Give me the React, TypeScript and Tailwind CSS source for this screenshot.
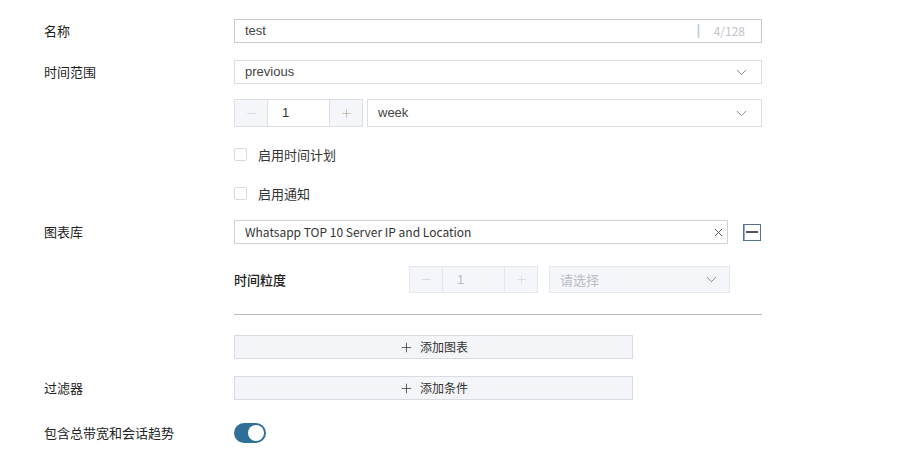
import { Plus, Minus, ChevronDown, X } from "lucide-react";

/* ── Shared bits ── */

const CJK = "font-['Noto_Sans_CJK_SC',sans-serif]";
const ARIAL = "font-['Liberation_Sans','Noto_Sans_CJK_SC',sans-serif]";

function Label({ children }: { children: React.ReactNode }) {
  return (
    <div className={`w-[234px] shrink-0 pl-[44px] text-[13px] text-[#222] ${CJK}`}>
      {children}
    </div>
  );
}

const Spacer = () => <div className="w-[234px] shrink-0" />;

function Stepper({ disabled }: { disabled?: boolean }) {
  const border = disabled ? "border-[#e4e7ed]" : "border-[#dcdfe6]";
  return (
    <div className={`flex h-full w-[129px] border ${border}`}>
      <div className={`flex w-[33px] items-center justify-center border-r ${border} bg-[#f4f6f9]`}>
        <Minus size={13} strokeWidth={1.2} className="text-[#c4c8d0]" />
      </div>
      <div
        className={`flex flex-1 items-center pl-[14px] text-[13px] ${ARIAL} ${
          disabled ? "bg-[#f4f6f9] text-[#b8bcc4]" : "bg-white text-[#333]"
        }`}
      >
        1
      </div>
      <div className={`flex w-[33px] items-center justify-center border-l ${border} bg-[#f4f6f9]`}>
        <Plus size={13} strokeWidth={1.2} className={disabled ? "text-[#d0d4da]" : "text-[#b0a090]"} />
      </div>
    </div>
  );
}

function Checkbox({ label }: { label: string }) {
  return (
    <div className="flex items-center">
      <Spacer />
      <div className="h-[13px] w-[13px] rounded-[2px] border border-[#d8dbe0] bg-white" />
      <span className={`ml-[11px] text-[13px] text-[#333] ${CJK}`}>{label}</span>
    </div>
  );
}

function AddButton({ label }: { label: string }) {
  return (
    <div className="flex h-[24px] w-[399px] items-center justify-center gap-[6px] border border-[#d8dce2] bg-[#f3f5f8]">
      <Plus size={15} strokeWidth={1.2} className="text-[#333]" />
      <span className={`text-[12px] text-[#333] ${CJK}`}>{label}</span>
    </div>
  );
}

/* ── Page ── */

export default function App() {
  return (
    <div className="h-[458px] w-[923px] bg-white pt-[19px]">
      {/* 名称 */}
      <div className="flex h-[24px] items-center">
        <Label>名称</Label>
        <div className="flex h-full w-[528px] items-center border border-[#c8cad2] pl-[10px] pr-[16px]">
          <span className={`flex-1 text-[13px] text-[#444] ${ARIAL}`}>test</span>
          <div className="mr-[14px] h-[14px] w-[3px] bg-gradient-to-r from-white via-[#b8cfe0] to-white" />
          <span className={`text-[12px] text-[#c0c4cc] ${CJK}`}>4/128</span>
        </div>
      </div>

      {/* 时间范围 */}
      <div className="mt-[17px] flex h-[24px] items-center">
        <Label>时间范围</Label>
        <div className="flex h-full w-[528px] items-center border border-[#dcdfe6] pl-[10px] pr-[11px]">
          <span className={`flex-1 text-[13px] text-[#444] ${ARIAL}`}>previous</span>
          <ChevronDown size={17} strokeWidth={1.1} className="text-[#666]" />
        </div>
      </div>

      <div className="mt-[15px] flex h-[28px]">
        <Spacer />
        <Stepper />
        <div className="ml-[4px] flex h-full w-[395px] items-center border border-[#dcdfe6] pl-[10px] pr-[11px]">
          <span className={`flex-1 text-[13px] text-[#444] ${ARIAL}`}>week</span>
          <ChevronDown size={17} strokeWidth={1.1} className="text-[#666]" />
        </div>
      </div>

      <div className="mt-[18px]">
        <Checkbox label="启用时间计划" />
      </div>
      <div className="mt-[19px]">
        <Checkbox label="启用通知" />
      </div>

      {/* 图表库 */}
      <div className="mt-[17px] flex h-[24px] items-center">
        <Label>图表库</Label>
        <div className="flex h-full w-[494px] items-center border border-[#cfd1d6] pl-[10px] pr-[2px]">
          <span className={`flex-1 text-[12px] text-[#333] ${CJK}`}>
            Whatsapp TOP 10 Server IP and Location
          </span>
          <X size={13} strokeWidth={1.8} className="text-[#555]" />
        </div>
        <div className="ml-[15px] flex h-[17px] w-[18px] items-center justify-center border border-[#5a6f8a] shadow-[inset_1px_0_0_#8fb3d8]">
          <div className="h-[1.5px] w-[12px] bg-[#555]" />
        </div>
      </div>

      {/* 时间粒度 */}
      <div className="mt-[22px] flex h-[27px] items-center">
        <Spacer />
        <div className={`w-[175px] text-[13px] font-medium text-[#222] ${CJK}`}>时间粒度</div>
        <Stepper disabled />
        <div className="ml-[11px] flex h-full w-[181px] items-center border border-[#e4e7ed] bg-[#f4f6f9] pl-[10px] pr-[9px]">
          <span className={`flex-1 text-[13px] text-[#b8bcc4] ${CJK}`}>请选择</span>
          <ChevronDown size={17} strokeWidth={1.1} className="text-[#666]" />
        </div>
      </div>

      <div className="mt-[21px] flex">
        <Spacer />
        <div className="h-px w-[528px] bg-[#b8b8b8]" />
      </div>

      <div className="mt-[20px] flex">
        <Spacer />
        <AddButton label="添加图表" />
      </div>

      {/* 过滤器 */}
      <div className="mt-[17px] flex items-center">
        <Label>过滤器</Label>
        <AddButton label="添加条件" />
      </div>

      {/* 包含总带宽和会话趋势 */}
      <div className="mt-[23px] flex items-center">
        <Label>包含总带宽和会话趋势</Label>
        <div className="flex h-[20px] w-[32px] items-center justify-end rounded-full bg-[#2f6f98] pr-[2px]">
          <div className="h-[16px] w-[16px] rounded-full bg-white" />
        </div>
      </div>
    </div>
  );
}
